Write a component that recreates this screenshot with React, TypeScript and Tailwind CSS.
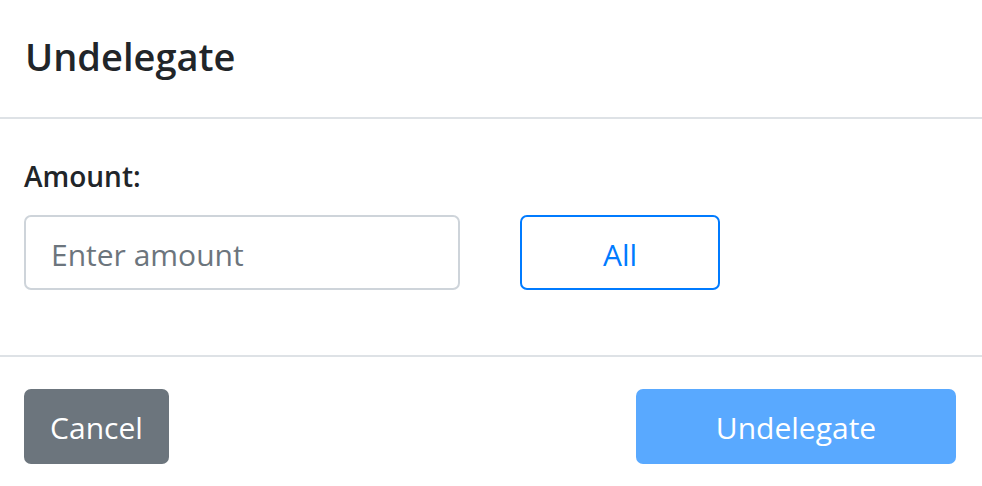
export default function App() {
  return (
    <div className="flex h-[486px] w-[982px] flex-col bg-white font-['Open_Sans',sans-serif] text-[#212529]">
      {/* Header */}
      <div className="h-[119px] border-b-2 border-[#dee2e6] px-[25px] pt-[37px]">
        <h5 className="text-[38px] font-semibold leading-none">Undelegate</h5>
      </div>

      {/* Body */}
      <div className="h-[236px] px-[24px] pt-[43px]">
        <label className="mb-[25px] block text-[28px] font-semibold leading-none">Amount:</label>
        <div className="flex items-center gap-[60px]">
          <input
            type="text"
            placeholder="Enter amount"
            className="h-[75px] w-[436px] rounded-[7px] border-2 border-[#ced4da] bg-white px-[25px] pt-[3px] text-[30px] text-[#495057] outline-none placeholder:text-[#6c757d]"
          />
          <button className="h-[75px] w-[200px] rounded-[7px] border-2 border-[#007bff] bg-white pt-[3px] text-[30px] text-[#007bff]">
            All
          </button>
        </div>
      </div>

      {/* Footer */}
      <div className="flex justify-between border-t-2 border-[#dee2e6] pl-[24px] pr-[26px] pt-[32px]">
        <button className="h-[75px] w-[145px] rounded-[7px] bg-[#6c757d] pt-[2px] text-[30px] text-white">Cancel</button>
        <button disabled className="h-[75px] w-[320px] rounded-[7px] bg-[#59a9ff] pt-[2px] text-[30px] text-white">
          Undelegate
        </button>
      </div>
    </div>
  );
}
